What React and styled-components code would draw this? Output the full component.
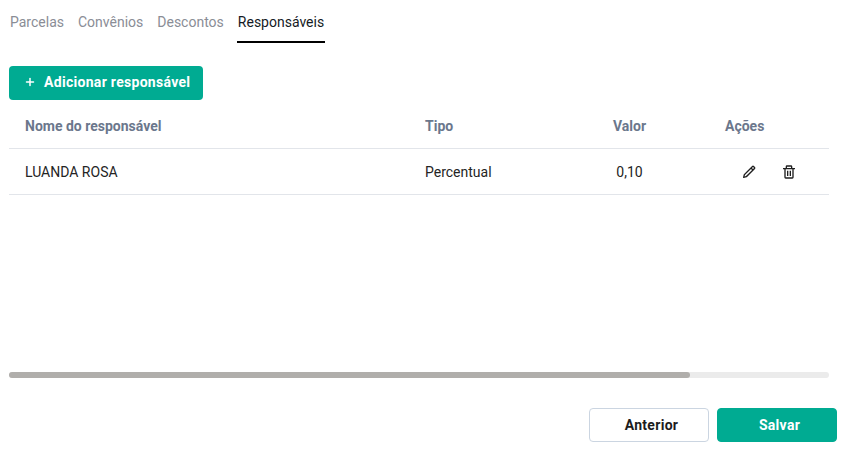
import React from 'react';
import styled, { createGlobalStyle } from 'styled-components';
import { Plus } from 'lucide-react';
import { BiPencil, BiTrash } from 'react-icons/bi';

const GlobalStyle = createGlobalStyle`
  html, body {
    margin: 0;
    padding: 0;
    background: #ffffff;
  }
  body {
    font-family: Roboto, "Liberation Sans", sans-serif;
    overflow: hidden;
  }
`;

const Page = styled.div`
  width: 856px;
  height: 449px;
  display: flex;
  flex-direction: column;
  padding: 0 27px 0 9px;
  box-sizing: border-box;
`;

const Tabs = styled.nav`
  display: flex;
  height: 43px;
  gap: 12px;
`;

const Tab = styled.div`
  height: 43px;
  box-sizing: border-box;
  padding: 13px 1px 0;
  font-size: 14px;
  line-height: 18px;
  color: ${(p) => (p.$active ? '#141a24' : '#8a8d96')};
  border-bottom: 2px solid ${(p) => (p.$active ? '#000000' : 'transparent')};
`;

const AddButton = styled.button`
  margin-top: 23px;
  align-self: flex-start;
  width: 194px;
  height: 34px;
  display: flex;
  align-items: center;
  gap: 8px;
  padding: 0 0 2px 15px;
  border: 0;
  border-radius: 4px;
  background: #00ab92;
  color: #ffffff;
  font-family: inherit;
  font-size: 14px;
  font-weight: 700;
  letter-spacing: 0.3px;
`;

const Table = styled.div`
  display: flex;
  flex-direction: column;
  flex: 0 0 272px;
`;

const Row = styled.div`
  display: grid;
  grid-template-columns: 400px 150px 109px 1fr;
  align-items: center;
  height: ${(p) => (p.$head ? '49px' : '46px')};
  padding: ${(p) => (p.$head ? '4px 0 0 16px' : '0 0 0 16px')};
  box-sizing: border-box;
  border-bottom: 1px solid #e2e5ea;
  font-size: 14px;
  color: #242424;
`;

const HeadCell = styled.div`
  font-weight: 700;
  color: #6b778c;
  text-align: ${(p) => p.$align || 'left'};
  padding-left: ${(p) => p.$inset || 0};
`;

const Cell = styled.div`
  text-align: ${(p) => p.$align || 'left'};
`;

const Actions = styled.div`
  display: flex;
  align-items: center;
  gap: 24px;
  padding-left: 57px;
`;

const IconButton = styled.span`
  display: flex;
  color: #1f1f1f;
`;

const Scrollbar = styled.div`
  height: 6px;
  border-radius: 3px;
  background: #ebebeb;
`;

const Thumb = styled.div`
  width: 681px;
  height: 6px;
  border-radius: 3px;
  background: #b0aeab;
`;

const Footer = styled.footer`
  display: flex;
  justify-content: flex-end;
  gap: 8px;
  margin: 30px -8px 0 0;
`;

const FooterButton = styled.button`
  width: 120px;
  height: 34px;
  box-sizing: border-box;
  padding: 0 0 0 5px;
  border-radius: 4px;
  border: 1px solid ${(p) => (p.$primary ? '#00ab92' : '#cbd5e1')};
  background: ${(p) => (p.$primary ? '#00ab92' : '#ffffff')};
  color: ${(p) => (p.$primary ? '#ffffff' : '#1c1c1c')};
  font-family: inherit;
  font-size: 14px;
  font-weight: 700;
  letter-spacing: 0.3px;
`;

const App = () => (
  <Page>
    <GlobalStyle />
    <Tabs>
      <Tab>Parcelas</Tab>
      <Tab>Convênios</Tab>
      <Tab>Descontos</Tab>
      <Tab $active>Responsáveis</Tab>
    </Tabs>
    <AddButton>
      <Plus size={12} strokeWidth={3} />
      Adicionar responsável
    </AddButton>
    <Table>
      <Row $head>
        <HeadCell>Nome do responsável</HeadCell>
        <HeadCell>Tipo</HeadCell>
        <HeadCell $align="center">Valor</HeadCell>
        <HeadCell $inset="41px">Ações</HeadCell>
      </Row>
      <Row>
        <Cell>LUANDA ROSA</Cell>
        <Cell>Percentual</Cell>
        <Cell $align="center">0,10</Cell>
        <Actions>
          <IconButton><BiPencil size={16} /></IconButton>
          <IconButton><BiTrash size={16} /></IconButton>
        </Actions>
      </Row>
    </Table>
    <Scrollbar>
      <Thumb />
    </Scrollbar>
    <Footer>
      <FooterButton>Anterior</FooterButton>
      <FooterButton $primary>Salvar</FooterButton>
    </Footer>
  </Page>
);

export default App;
